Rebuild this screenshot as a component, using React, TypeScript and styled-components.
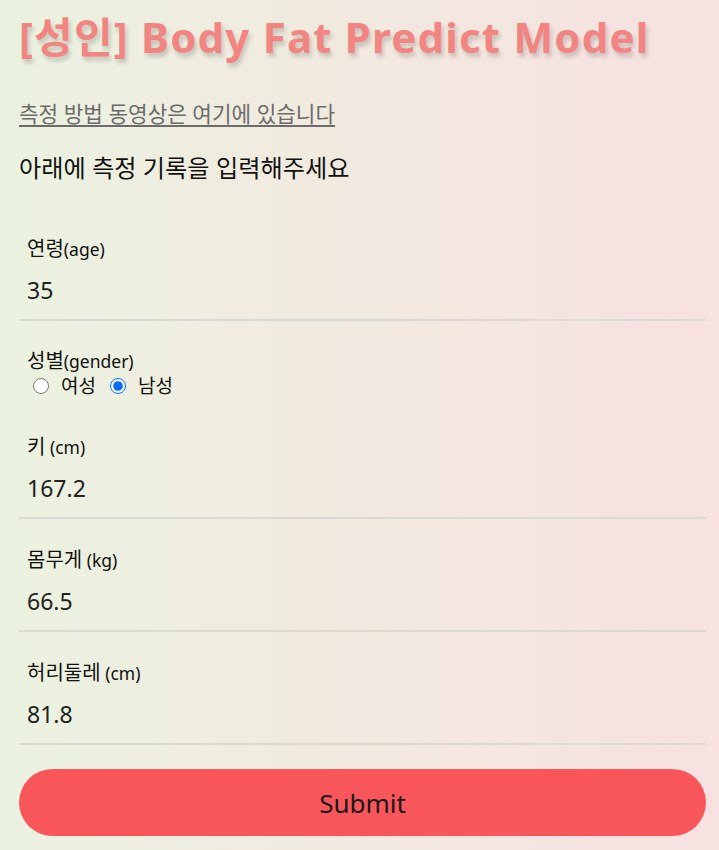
import React, { useState } from "react";
import styled, { createGlobalStyle } from "styled-components";

const Global = createGlobalStyle`
  html, body {
    margin: 0;
    padding: 0;
  }
  body {
    min-height: 850px;
    background: linear-gradient(to right, #ebf2e0 0%, #f1eadf 45%, #f7e1e1 100%);
    font-family: "Noto Sans", "Noto Sans CJK KR", sans-serif;
    color: #111;
  }
`;

const Page = styled.main`
  display: flex;
  flex-direction: column;
  padding: 0 13px 0 19px;
`;

const Title = styled.h1`
  margin: 12px 0 0;
  font-family: "Noto Sans", "Noto Sans CJK KR", sans-serif;
  font-size: 42px;
  line-height: 50px;
  font-weight: 700;
  letter-spacing: 1.2px;
  color: #f28482;
  text-shadow: 2px 4px 4px rgba(0, 0, 0, 0.18);
  white-space: nowrap;
`;

const VideoLink = styled.a`
  margin-top: 39px;
  align-self: flex-start;
  font-size: 21.3px;
  line-height: 26px;
  color: #6b6b6b;
  text-decoration: underline;
  text-underline-offset: 3px;
`;

const Lead = styled.p`
  margin: 26px 0 0;
  font-size: 24.2px;
  line-height: 30px;
  color: #111;
`;

const Form = styled.form`
  display: flex;
  flex-direction: column;
  margin-top: 25px;
`;

const Field = styled.div<{ $bordered?: boolean }>`
  display: flex;
  flex-direction: column;
  padding: ${(p) => (p.$bordered ? "29px 8px 14px" : "28px 8px 9px")};
  border-bottom: ${(p) => (p.$bordered ? "2px solid #d9d9d5" : "none")};
`;

const Label = styled.label`
  display: block;
  height: 24px;
  font-size: 20px;
  line-height: 24px;
  color: #111;
`;

const Unit = styled.span`
  font-size: 17.5px;
  line-height: 1;
`;

const ValueInput = styled.input`
  margin-top: 14px;
  padding: 0;
  border: none;
  background: transparent;
  outline: none;
  font-family: "Noto Sans", "Noto Sans CJK KR", sans-serif;
  font-size: 23px;
  line-height: 30px;
  height: 30px;
  color: #222;
`;

const RadioRow = styled.div`
  display: flex;
  align-items: center;
  height: 22px;
  margin-top: 2px;
  padding-left: 6px;
`;

const RadioOption = styled.label`
  display: flex;
  align-items: center;
  font-size: 19px;
  line-height: 22px;
  margin-right: 14px;
`;

const Radio = styled.input`
  width: 16px;
  height: 16px;
  margin: 0 12px 0 0;
  accent-color: #0a6cf5;
`;

const SubmitButton = styled.button`
  margin-top: 24px;
  height: 67px;
  border: none;
  border-radius: 34px;
  background: #f9565c;
  font-family: "Noto Sans", "Noto Sans CJK KR", sans-serif;
  font-size: 26px;
  color: #1a1a1a;
  cursor: pointer;
`;

const fields = [
  { key: "height", label: "키", unit: " (cm)", value: "167.2" },
  { key: "weight", label: "몸무게", unit: " (kg)", value: "66.5" },
  { key: "waist", label: "허리둘레", unit: " (cm)", value: "81.8" },
];

export default function App() {
  const [gender, setGender] = useState("male");
  return (
    <>
      <Global />
      <Page>
        <Title>[성인] Body Fat Predict Model</Title>
        <VideoLink href="#">측정 방법 동영상은 여기에 있습니다</VideoLink>
        <Lead>아래에 측정 기록을 입력해주세요</Lead>
        <Form onSubmit={(e) => e.preventDefault()}>
          <Field $bordered>
            <Label>
              연령<Unit>(age)</Unit>
            </Label>
            <ValueInput defaultValue="35" />
          </Field>
          <Field>
            <Label>
              성별<Unit>(gender)</Unit>
            </Label>
            <RadioRow>
              <RadioOption>
                <Radio
                  type="radio"
                  name="gender"
                  checked={gender === "female"}
                  onChange={() => setGender("female")}
                />
                여성
              </RadioOption>
              <RadioOption>
                <Radio
                  type="radio"
                  name="gender"
                  checked={gender === "male"}
                  onChange={() => setGender("male")}
                />
                남성
              </RadioOption>
            </RadioRow>
          </Field>
          {fields.map((f) => (
            <Field $bordered key={f.key}>
              <Label>
                {f.label}
                <Unit>{f.unit}</Unit>
              </Label>
              <ValueInput defaultValue={f.value} />
            </Field>
          ))}
          <SubmitButton type="submit">Submit</SubmitButton>
        </Form>
      </Page>
    </>
  );
}
